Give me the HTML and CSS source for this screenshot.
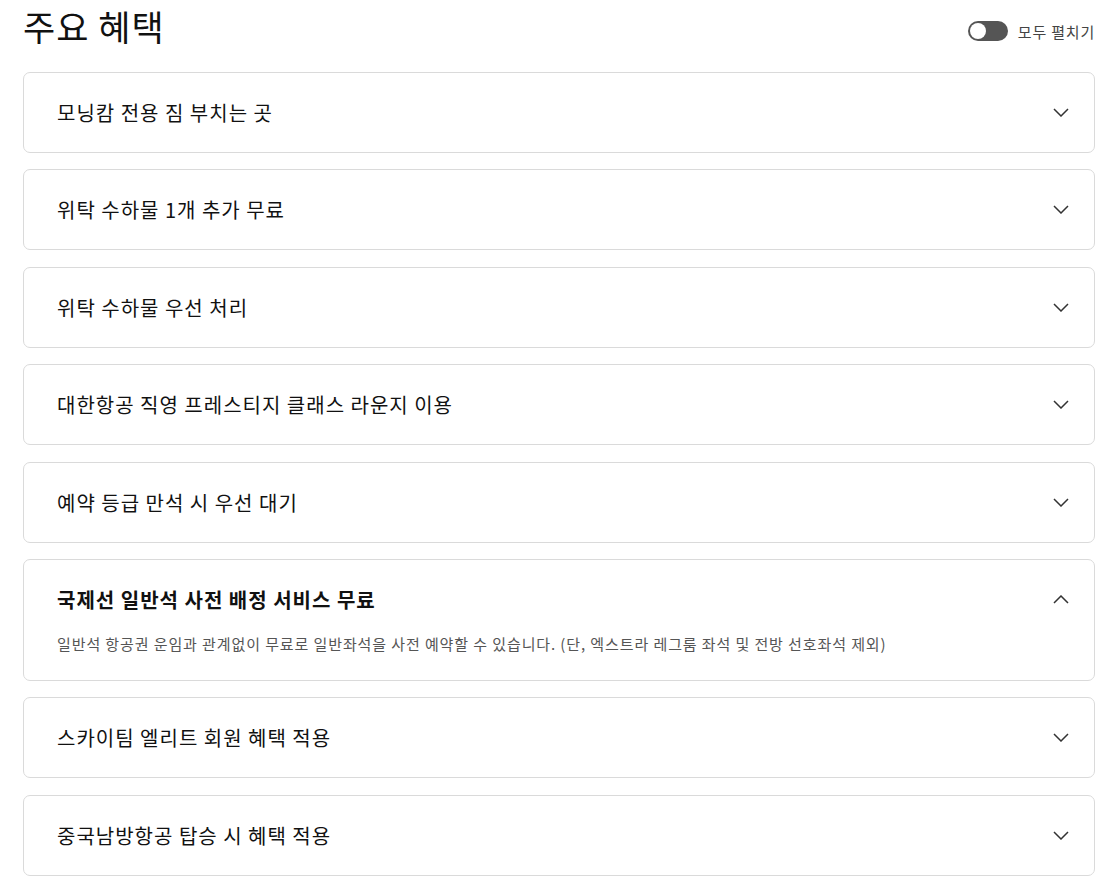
FILE: index.html
```html
<html>
<head>
  <meta charset="utf-8">
  <link rel="stylesheet" href="styles.css">
</head>
<body>
  <div class="page">
    <div class="header">
      <h1>주요 혜택</h1>
      <label class="expand-all">
        <span class="switch"><span class="knob"></span></span>
        <span>모두 펼치기</span>
      </label>
    </div>

    <div class="list">
      <div class="item">
        <div class="item-head">
          <span>모닝캄 전용 짐 부치는 곳</span>
          <svg class="chev" width="16" height="9" viewBox="0 0 16 9"><path d="M1 1l7 7 7-7" fill="none" stroke="#333" stroke-width="1.5"/></svg>
        </div>
      </div>
      <div class="item">
        <div class="item-head">
          <span>위탁 수하물 1개 추가 무료</span>
          <svg class="chev" width="16" height="9" viewBox="0 0 16 9"><path d="M1 1l7 7 7-7" fill="none" stroke="#333" stroke-width="1.5"/></svg>
        </div>
      </div>
      <div class="item">
        <div class="item-head">
          <span>위탁 수하물 우선 처리</span>
          <svg class="chev" width="16" height="9" viewBox="0 0 16 9"><path d="M1 1l7 7 7-7" fill="none" stroke="#333" stroke-width="1.5"/></svg>
        </div>
      </div>
      <div class="item">
        <div class="item-head">
          <span>대한항공 직영 프레스티지 클래스 라운지 이용</span>
          <svg class="chev" width="16" height="9" viewBox="0 0 16 9"><path d="M1 1l7 7 7-7" fill="none" stroke="#333" stroke-width="1.5"/></svg>
        </div>
      </div>
      <div class="item">
        <div class="item-head">
          <span>예약 등급 만석 시 우선 대기</span>
          <svg class="chev" width="16" height="9" viewBox="0 0 16 9"><path d="M1 1l7 7 7-7" fill="none" stroke="#333" stroke-width="1.5"/></svg>
        </div>
      </div>
      <div class="item open">
        <div class="item-head">
          <span>국제선 일반석 사전 배정 서비스 무료</span>
          <svg class="chev" width="16" height="9" viewBox="0 0 16 9"><path d="M1 8l7-7 7 7" fill="none" stroke="#333" stroke-width="1.5"/></svg>
        </div>
        <p class="item-body">일반석 항공권 운임과 관계없이 무료로 일반좌석을 사전 예약할 수 있습니다. (단, 엑스트라 레그룸 좌석 및 전방 선호좌석 제외)</p>
      </div>
      <div class="item">
        <div class="item-head">
          <span>스카이팀 엘리트 회원 혜택 적용</span>
          <svg class="chev" width="16" height="9" viewBox="0 0 16 9"><path d="M1 1l7 7 7-7" fill="none" stroke="#333" stroke-width="1.5"/></svg>
        </div>
      </div>
      <div class="item">
        <div class="item-head">
          <span>중국남방항공 탑승 시 혜택 적용</span>
          <svg class="chev" width="16" height="9" viewBox="0 0 16 9"><path d="M1 1l7 7 7-7" fill="none" stroke="#333" stroke-width="1.5"/></svg>
        </div>
      </div>
    </div>
  </div>
</body>
</html>
```

FILE: styles.css
```css
body {
  margin: 0;
  background: #fff;
  color: #111;
  font-family: "Noto Sans CJK KR", "Noto Sans", sans-serif;
}
.page {
  padding: 0 14px 0 23px;
}
.header {
  display: flex;
  justify-content: space-between;
  align-items: center;
  height: 52px;
  margin-bottom: 20px;
}
.header h1 {
  margin: 0;
  font-size: 35px;
  font-weight: 400;
  line-height: 52px;
  letter-spacing: 1px;
}
.expand-all {
  display: flex;
  align-items: center;
  gap: 10px;
  margin-top: 10px;
  font-size: 15px;
  letter-spacing: 0.8px;
  color: #444;
}
.switch {
  display: block;
  width: 40px;
  height: 20px;
  border-radius: 10px;
  background: #555;
  position: relative;
}
.switch .knob {
  position: absolute;
  left: 2px;
  top: 2px;
  width: 16px;
  height: 16px;
  border-radius: 50%;
  background: #fff;
}
.list {
  display: flex;
  flex-direction: column;
  gap: 16.4px;
}
.item {
  border: 1px solid #dadada;
  border-radius: 7px;
  padding: 24px 25px 24px 33px;
}
.item-head {
  display: flex;
  justify-content: space-between;
  align-items: center;
  font-size: 20px;
  line-height: 31px;
  letter-spacing: 1px;
}
.item.open .item-head {
  font-weight: 700;
}
.item-body {
  margin: 17px 0 0;
  font-size: 15px;
  line-height: 24px;
  letter-spacing: 0.9px;
  color: #555;
}
```
